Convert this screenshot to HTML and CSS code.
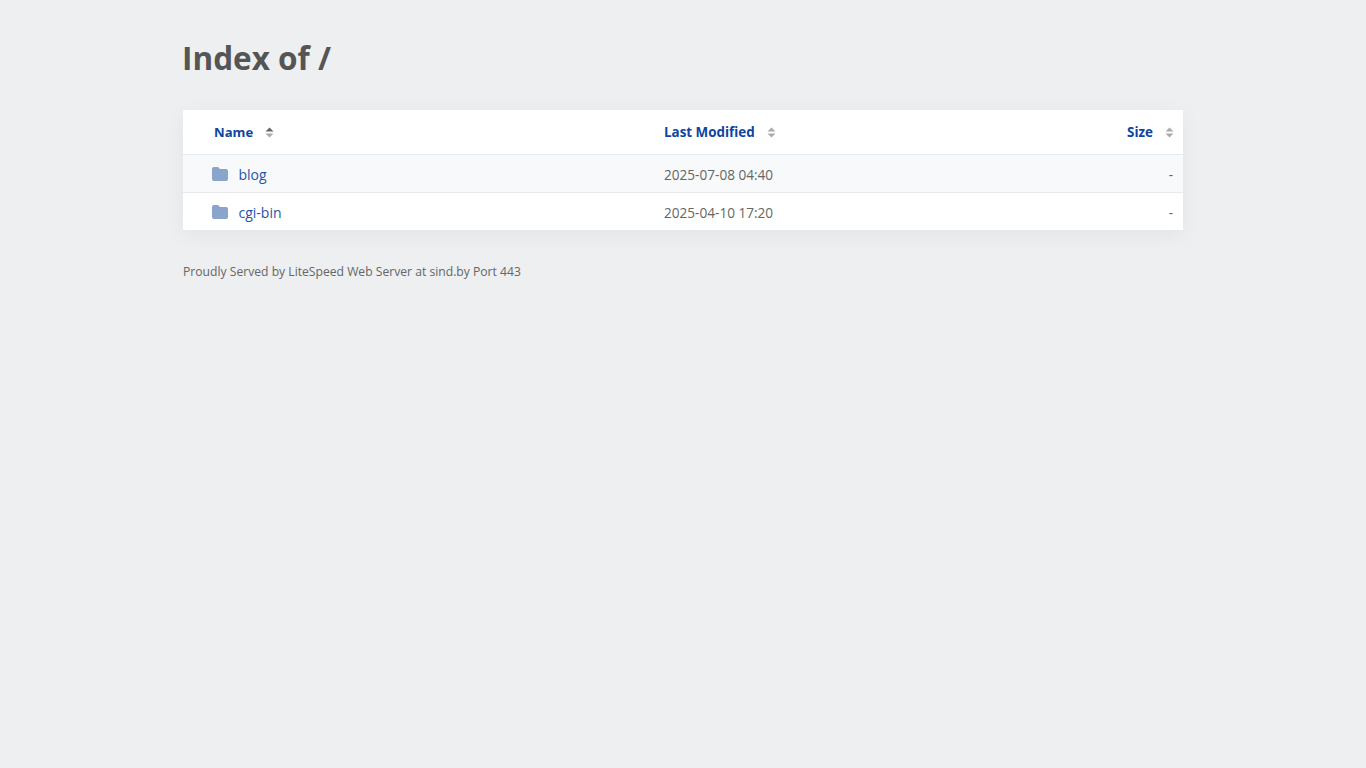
FILE: index.html
```html
<!DOCTYPE html>
<html lang="en">
<head>
<meta charset="utf-8">
<title>Index of /</title>
<link rel="stylesheet" href="styles.css">
</head>
<body>
<main class="page">
  <h1 class="title">Index of /</h1>
  <table class="listing">
    <colgroup><col class="col-name"><col class="col-date"><col class="col-size"></colgroup>
    <thead>
      <tr>
        <th class="cell-name"><a class="sort" href="#">Name</a><svg class="arrows active" viewBox="0 0 9 11"><path class="up" d="M4.5 0.5 L8.5 4.5 H0.5 Z"/><path class="down" d="M0.5 6.5 H8.5 L4.5 10.5 Z"/></svg></th>
        <th class="cell-date"><a class="sort" href="#">Last Modified</a><svg class="arrows" viewBox="0 0 9 11"><path class="down" d="M4.5 0.5 L8.5 4.5 H0.5 Z"/><path class="down" d="M0.5 6.5 H8.5 L4.5 10.5 Z"/></svg></th>
        <th class="cell-size"><a class="sort" href="#">Size</a><svg class="arrows" viewBox="0 0 9 11"><path class="down" d="M4.5 0.5 L8.5 4.5 H0.5 Z"/><path class="down" d="M0.5 6.5 H8.5 L4.5 10.5 Z"/></svg></th>
      </tr>
    </thead>
    <tbody>
      <tr class="odd">
        <td class="cell-name"><a class="entry" href="#"><svg class="folder" viewBox="0 0 16 14"><path d="M2 0 H6 L8 2 H14 A2 2 0 0 1 16 4 V12 A2 2 0 0 1 14 14 H2 A2 2 0 0 1 0 12 V2 A2 2 0 0 1 2 0 Z"/></svg>blog</a></td>
        <td class="cell-date">2025-07-08 04:40</td>
        <td class="cell-size">-</td>
      </tr>
      <tr>
        <td class="cell-name"><a class="entry" href="#"><svg class="folder" viewBox="0 0 16 14"><path d="M2 0 H6 L8 2 H14 A2 2 0 0 1 16 4 V12 A2 2 0 0 1 14 14 H2 A2 2 0 0 1 0 12 V2 A2 2 0 0 1 2 0 Z"/></svg>cgi-bin</a></td>
        <td class="cell-date">2025-04-10 17:20</td>
        <td class="cell-size">-</td>
      </tr>
    </tbody>
  </table>
  <p class="footer">Proudly Served by LiteSpeed Web Server at sind.by Port 443</p>
</main>
</body>
</html>
```
FILE: styles.css
```css
* { box-sizing: border-box; }
html, body { margin: 0; padding: 0; }
body {
  background: #edeff1;
  color: #5a5a5a;
  font-family: "Open Sans", "Noto Sans", sans-serif;
  font-size: 13px;
}
.page { width: 1000px; margin: 0 auto; padding: 36px 0 0; }
.title {
  margin: 0 0 30px -1px;
  font-size: 31.5px;
  line-height: 44px;
  font-weight: 700;
  color: #555;
}
.listing {
  width: 1000px;
  table-layout: fixed;
  border-collapse: separate;
  border-spacing: 0;
  background: #fff;
  box-shadow: 0 5px 20px rgba(0, 0, 0, 0.05);
}
.col-name { width: 471px; }
.col-date { width: 300px; }
.col-size { width: 229px; }
th { height: 45px; padding: 0 9px 0 0; text-align: left; border-bottom: 1px solid #e8ebee; font-size: 13.4px; font-weight: 700; }
td { height: 38px; padding: 1px 9px 0 0; border-bottom: 1px solid #e8ebee; color: #666; font-size: 13.6px; }
tbody tr:last-child td { height: 37px; border-bottom: 0; }
.odd { background: #f7f9fa; }
th.cell-name { padding-left: 31px; font-size: 13.1px; }
td.cell-name { padding-left: 29px; font-size: 14px; }
th.cell-date, td.cell-date { padding-left: 10px; }
.cell-size { text-align: right; }
td.cell-size { padding-right: 10px; }
.sort { color: #0f45a0; text-decoration: none; }
.entry { display: flex; align-items: center; color: #2456a8; text-decoration: none; }
.folder { width: 16px; height: 14px; margin: 0 11px 0 -0.5px; fill: #89a5cc; flex: none; }
.arrows { width: 9px; height: 11px; margin-left: 12px; vertical-align: -1px; }
.arrows .up { fill: #666; }
.arrows .down { fill: #aaa; }
.footer { margin: 33px 0 0; font-size: 12.15px; line-height: 18px; color: #666; }
```
